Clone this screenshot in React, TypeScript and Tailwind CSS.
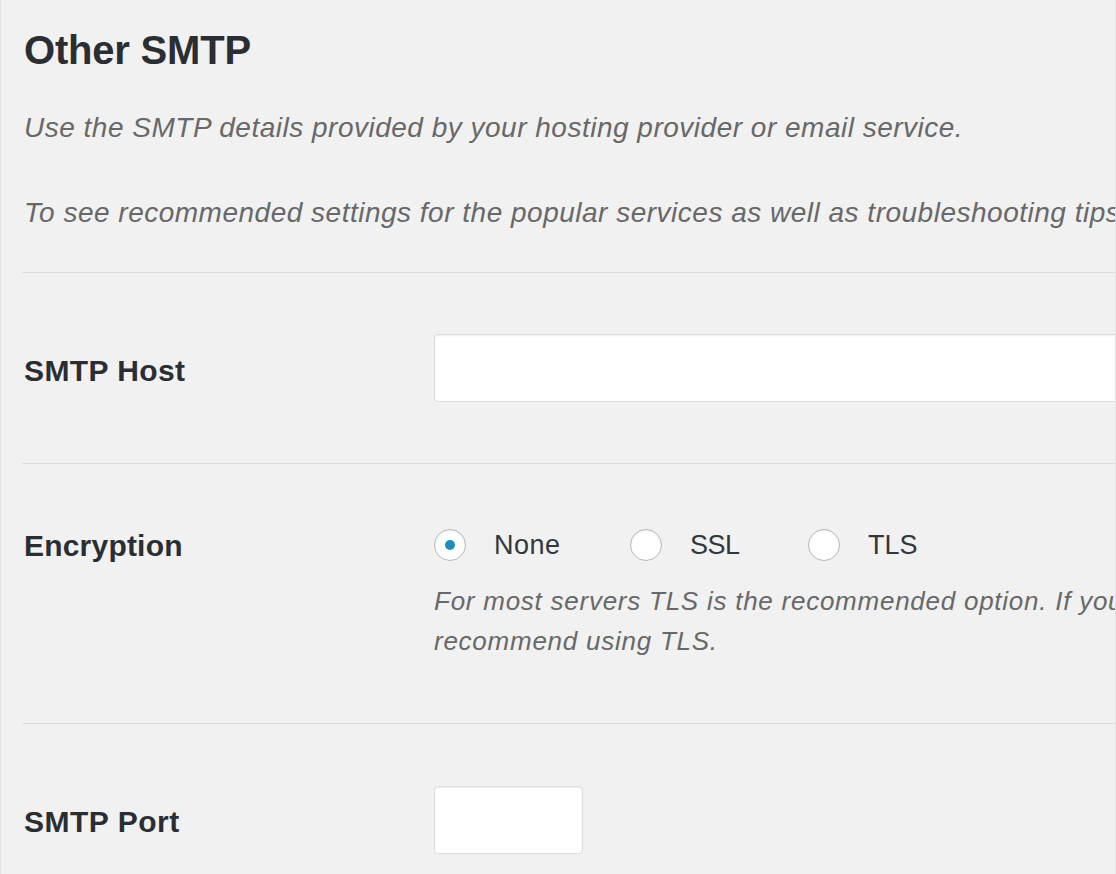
import React from "react";

function Radio({ checked }: { checked?: boolean }) {
  return (
    <span className="flex h-[32px] w-[32px] shrink-0 items-center justify-center rounded-full border border-[#b4b9be] bg-white shadow-[inset_0_1px_2px_rgba(0,0,0,0.07)]">
      {checked ? <span className="block h-[10px] w-[10px] rounded-full bg-[#1e8cbe]" /> : null}
    </span>
  );
}

export default function App() {
  return (
    <div
      className="h-[874px] w-[1116px] overflow-hidden border-x border-[#e2e2e2] bg-[#f1f1f1]"
      style={{ fontFamily: '"Liberation Sans", Arial, Helvetica, sans-serif' }}
    >
      <div className="w-[2000px] pl-[23px]">
        <h2 className="pt-[26px] text-[40px] font-bold leading-[48px] tracking-[-0.2px] text-[#2a2e33]">Other SMTP</h2>
        <p className="mt-[36px] whitespace-nowrap text-[28px] italic leading-[36px] tracking-[0.5px] text-[#686868]">
          Use the SMTP details provided by your hosting provider or email service.
        </p>
        <p className="mt-[49px] whitespace-nowrap text-[28px] italic leading-[36px] tracking-[0.5px] text-[#686868]">
          To see recommended settings for the popular services as well as troubleshooting tips, check out our SMTP documentation.
        </p>

        <div className="-ml-[2px] mt-[41px] border-t border-[#dcdcdc]">
          {/* SMTP Host */}
          <div className="flex items-start pl-[2px] pt-[61px] pb-[61px]">
            <div className="mt-[22px] w-[410px] shrink-0 text-[30px] font-bold leading-[30px] tracking-[0.4px] text-[#2a2e33]">SMTP Host</div>
            <div className="h-[68px] w-[900px] rounded-[4px] border border-[#dddddd] bg-white shadow-[inset_0_1px_2px_rgba(0,0,0,0.07)]" />
          </div>

          {/* Encryption */}
          <div className="flex items-start border-t border-[#dcdcdc] pl-[2px] pt-[65px] pb-[62px]">
            <div className="mt-[2px] w-[410px] shrink-0 text-[30px] font-bold leading-[30px] tracking-[0.2px] text-[#2a2e33]">Encryption</div>
            <div>
              <div className="flex h-[32px] items-center text-[27px] text-[#32373c]">
                <label className="flex w-[196px] items-center gap-[28px]">
                  <Radio checked />
                  <span className="tracking-[0.5px]">None</span>
                </label>
                <label className="flex w-[178px] items-center gap-[28px]">
                  <Radio />
                  <span className="tracking-[-0.5px]">SSL</span>
                </label>
                <label className="flex items-center gap-[28px]">
                  <Radio />
                  <span>TLS</span>
                </label>
              </div>
              <p className="mt-[20px] whitespace-nowrap text-[26px] italic leading-[40px] tracking-[0.75px] text-[#686868]">
                For most servers TLS is the recommended option. If your SMTP provider offers both SSL and TLS options, we
                <br />
                recommend using TLS.
              </p>
            </div>
          </div>

          {/* SMTP Port */}
          <div className="flex items-start border-t border-[#dcdcdc] pl-[2px] pt-[62px] pb-[40px]">
            <div className="mt-[21px] w-[410px] shrink-0 text-[30px] font-bold leading-[30px] tracking-[0.5px] text-[#2a2e33]">SMTP Port</div>
            <div className="h-[68px] w-[149px] rounded-[4px] border border-[#dddddd] bg-white shadow-[inset_0_1px_2px_rgba(0,0,0,0.07)]" />
          </div>
        </div>
      </div>
    </div>
  );
}
